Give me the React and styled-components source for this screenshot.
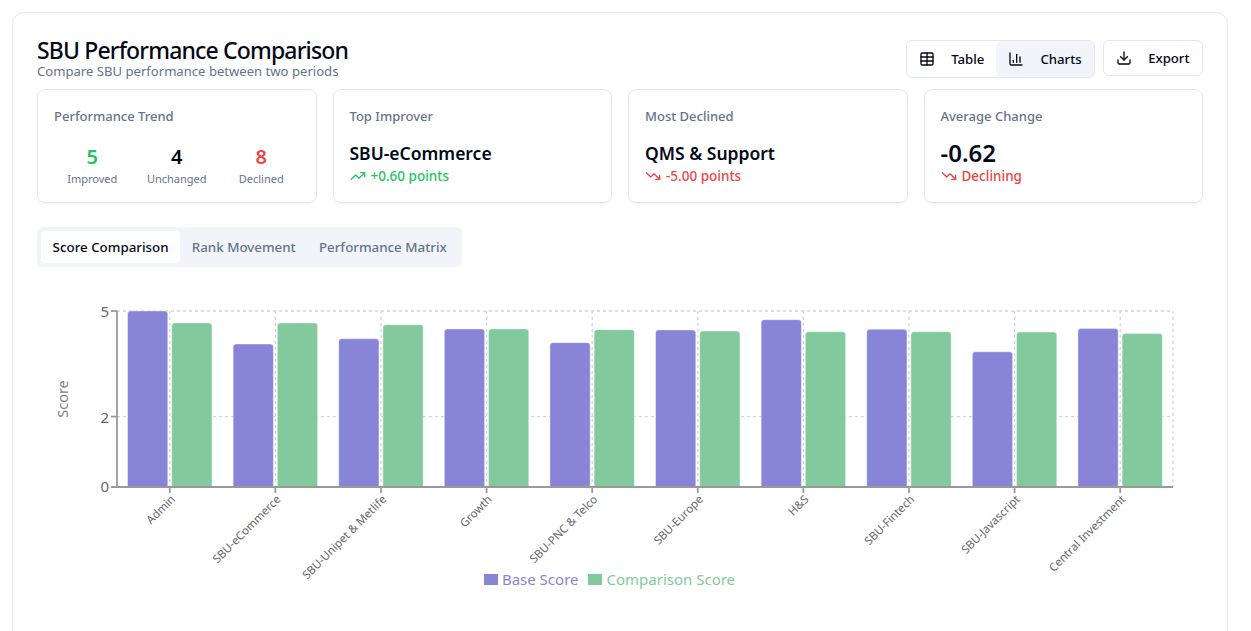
import React from 'react';
import styled, { createGlobalStyle } from 'styled-components';
import { Table, ChartColumn, Download, TrendingUp, TrendingDown } from 'lucide-react';

const GlobalStyle = createGlobalStyle`
  html, body {
    margin: 0;
    height: 631px;
    overflow: hidden;
    background: #ffffff;
  }
  body {
    font-family: 'Noto Sans', 'Open Sans', sans-serif;
    color: #020817;
  }
`;

const Page = styled.div`
  padding: 12px 23px 0 12px;
`;
const Panel = styled.section`
  box-sizing: border-box;
  height: 700px;
  padding: 24px;
  background: #fff;
  border: 1px solid #e2e8f0;
  border-radius: 12px;
`;
const Header = styled.header`
  display: flex;
  justify-content: space-between;
  align-items: flex-start;
`;
const Title = styled.h1`
  margin: 0;
  font-size: 23px;
  line-height: 27px;
  font-weight: 500;
  letter-spacing: -0.84px;
`;
const Subtitle = styled.p`
  margin: 0;
  font-size: 13.1px;
  line-height: 14px;
  color: #64748b;
`;
const Actions = styled.div`
  display: flex;
  gap: 8px;
  padding-top: 3px;
`;
const ViewSwitch = styled.div`
  display: flex;
  height: 38px;
  box-sizing: border-box;
  border: 1px solid #e2e8f0;
  border-radius: 6px;
`;
const ViewButton = styled.button`
  display: flex;
  align-items: center;
  gap: 16px;
  padding: 0 12px;
  font: 500 13.2px 'Noto Sans', sans-serif;
  color: #020817;
  border: 0;
  border-radius: 6px;
  background: ${p => (p.$active ? '#f1f5f9' : 'transparent')};
`;
const ExportButton = styled(ViewButton)`
  height: 36px;
  border: 1px solid #e2e8f0;
  background: #fff;
  padding: 0 12.5px;
`;
const Cards = styled.div`
  display: grid;
  grid-template-columns: repeat(4, minmax(0, 1fr));
  gap: 16px;
  margin-top: 11px;
`;
const Card = styled.div`
  box-sizing: border-box;
  height: 114px;
  padding: 16px;
  border: 1px solid #e2e8f0;
  border-radius: 8px;
  box-shadow: 0 1px 2px rgba(0, 0, 0, 0.05);
`;
const CardLabel = styled.div`
  font-size: 13px;
  line-height: 20px;
  font-weight: 500;
  color: #64748b;
`;
const TrendRow = styled.div`
  display: grid;
  grid-template-columns: repeat(3, 84.5px);
  justify-content: center;
  margin-top: 17px;
  text-align: center;
`;
const TrendCount = styled.div`
  font-size: 20px;
  line-height: 28px;
  font-weight: 600;
  color: ${p => p.$color};
`;
const TrendName = styled.div`
  font-size: 11px;
  line-height: 16px;
  color: #64748b;
`;
const CardValue = styled.div`
  margin-top: 13px;
  font-size: ${p => (p.$large ? '24px' : '17.5px')};
  line-height: 28px;
  font-weight: 600;
  color: #020817;
`;
const Delta = styled.div`
  display: flex;
  align-items: center;
  gap: 5px;
  font-size: 13.5px;
  line-height: 18px;
  font-weight: 500;
  color: ${p => p.$color};
`;
const TabList = styled.div`
  display: inline-flex;
  margin-top: 24px;
  padding: 4px;
  height: 40px;
  box-sizing: border-box;
  background: #f1f5f9;
  border-radius: 6px;
`;
const Tab = styled.div`
  display: flex;
  align-items: center;
  padding: 0 11.6px;
  font-size: 13.35px;
  font-weight: 500;
  border-radius: 4px;
  color: ${p => (p.$active ? '#020817' : '#64748b')};
  background: ${p => (p.$active ? '#fff' : 'transparent')};
`;
const ChartWrap = styled.div`
  margin-top: 28px;
`;
const ChartSvg = styled.svg`
  display: block;
  width: 1166px;
  height: 277px;
  overflow: visible;
`;
const Legend = styled.div`
  display: flex;
  justify-content: center;
  gap: 10px;
  margin-top: -2px;
  padding-right: 21px;
`;
const LegendItem = styled.div`
  display: flex;
  align-items: center;
  gap: 4px;
  font-size: 15px;
  line-height: 18px;
  color: ${p => p.$color};
`;
const LegendSwatch = styled.span`
  width: 14px;
  height: 11px;
  background: ${p => p.$color};
`;

const BASE = '#8884d8';
const COMPARE = '#82ca9d';
const GREEN = '#22c55e';
const RED = '#ef4444';

const data = [
  ['Admin', 5.0, 4.66],
  ['SBU-eCommerce', 4.06, 4.66],
  ['SBU-Unipet & Metlife', 4.21, 4.61],
  ['Growth', 4.49, 4.49],
  ['SBU-PNC & Telco', 4.1, 4.47],
  ['SBU-Europe', 4.46, 4.43],
  ['H&S', 4.75, 4.41],
  ['SBU-Fintech', 4.48, 4.41],
  ['SBU-Javascript', 3.84, 4.4],
  ['Central Investment', 4.5, 4.36],
];

// plot area in svg coordinates (svg sits at x=37, y=295 on the page)
const LEFT = 80;
const RIGHT = 1136;
const TOP = 16;
const BOTTOM = 192;
const BAND = (RIGHT - LEFT) / data.length;
const BAR_W = 40.2;
const yOf = v => BOTTOM - (v / 5) * (BOTTOM - TOP);

const barPath = (x, y, w, r = 3) =>
  `M${x},${BOTTOM}V${y + r}Q${x},${y} ${x + r},${y}H${x + w - r}Q${x + w},${y} ${x + w},${y + r}V${BOTTOM}Z`;

const Chart = () => (
  <ChartSvg viewBox="0 0 1166 277">
    <g stroke="#d4d4d4" strokeWidth="1.3" strokeDasharray="3 3" fill="none">
      {[5, 2].map(v => (
        <line key={v} x1={LEFT} x2={RIGHT} y1={yOf(v)} y2={yOf(v)} />
      ))}
      {data.map((d, i) => (
        <line key={d[0]} x1={LEFT + BAND * (i + 0.5)} x2={LEFT + BAND * (i + 0.5)} y1={TOP} y2={BOTTOM} />
      ))}
      <line x1={RIGHT} x2={RIGHT} y1={TOP} y2={BOTTOM} />
    </g>
    {data.map((d, i) => {
      const x0 = LEFT + BAND * i + BAND * 0.1;
      return (
        <g key={d[0]} stroke="#fff" strokeOpacity="0.6" strokeWidth="0.6">
          <path d={barPath(x0, yOf(d[1]), BAR_W)} fill={BASE} />
          <path d={barPath(x0 + BAR_W + 4, yOf(d[2]), BAR_W)} fill={COMPARE} />
        </g>
      );
    })}
    <g stroke="#999" strokeWidth="1.8">
      <line x1={LEFT} x2={LEFT} y1={TOP} y2={BOTTOM} />
      <line x1={LEFT - 6} x2={RIGHT} y1={BOTTOM} y2={BOTTOM} />
      {[5, 2].map(v => (
        <line key={v} x1={LEFT - 6} x2={LEFT} y1={yOf(v)} y2={yOf(v)} />
      ))}
      {data.map((d, i) => (
        <line key={d[0]} x1={LEFT + BAND * (i + 0.5)} x2={LEFT + BAND * (i + 0.5)} y1={BOTTOM} y2={BOTTOM + 6} />
      ))}
    </g>
    <g fill="#666" fontSize="15" textAnchor="end" fontFamily="Noto Sans, sans-serif">
      <text x={LEFT - 8} y={yOf(5) + 6}>5</text>
      <text x={LEFT - 8} y={yOf(2) + 6}>2</text>
      <text x={LEFT - 8} y={yOf(0) + 5}>0</text>
    </g>
    <text
      transform="translate(31 104) rotate(-90)"
      textAnchor="middle"
      fill="#808080"
      fontSize="14.5"
      fontFamily="Noto Sans, sans-serif"
    >
      Score
    </text>
    <g fill="#666" fontSize="11.4" textAnchor="end" fontFamily="Noto Sans, sans-serif">
      {data.map((d, i) => {
        const x = LEFT + BAND * (i + 0.5) + 6;
        return (
          <text key={d[0]} transform={`translate(${x} ${BOTTOM + 13}) rotate(-45)`}>
            {d[0]}
          </text>
        );
      })}
    </g>
  </ChartSvg>
);

export default function App() {
  return (
    <Page>
      <GlobalStyle />
      <Panel>
        <Header>
          <div>
            <Title>SBU Performance Comparison</Title>
            <Subtitle>Compare SBU performance between two periods</Subtitle>
          </div>
          <Actions>
            <ViewSwitch>
              <ViewButton>
                <Table size={16} />
                Table
              </ViewButton>
              <ViewButton $active>
                <ChartColumn size={16} />
                Charts
              </ViewButton>
            </ViewSwitch>
            <ExportButton>
              <Download size={16} />
              Export
            </ExportButton>
          </Actions>
        </Header>
        <Cards>
          <Card>
            <CardLabel>Performance Trend</CardLabel>
            <TrendRow>
              <div>
                <TrendCount $color={GREEN}>5</TrendCount>
                <TrendName>Improved</TrendName>
              </div>
              <div>
                <TrendCount $color="#020817">4</TrendCount>
                <TrendName>Unchanged</TrendName>
              </div>
              <div>
                <TrendCount $color={RED}>8</TrendCount>
                <TrendName>Declined</TrendName>
              </div>
            </TrendRow>
          </Card>
          <Card>
            <CardLabel>Top Improver</CardLabel>
            <CardValue>SBU-eCommerce</CardValue>
            <Delta $color={GREEN}>
              <TrendingUp size={16} />
              +0.60 points
            </Delta>
          </Card>
          <Card>
            <CardLabel>Most Declined</CardLabel>
            <CardValue>QMS &amp; Support</CardValue>
            <Delta $color={RED}>
              <TrendingDown size={16} />
              -5.00 points
            </Delta>
          </Card>
          <Card>
            <CardLabel>Average Change</CardLabel>
            <CardValue $large>-0.62</CardValue>
            <Delta $color={RED}>
              <TrendingDown size={16} />
              Declining
            </Delta>
          </Card>
        </Cards>
        <TabList>
          <Tab $active>Score Comparison</Tab>
          <Tab>Rank Movement</Tab>
          <Tab>Performance Matrix</Tab>
        </TabList>
        <ChartWrap>
          <Chart />
          <Legend>
            <LegendItem $color={BASE}>
              <LegendSwatch $color={BASE} />
              Base Score
            </LegendItem>
            <LegendItem $color={COMPARE}>
              <LegendSwatch $color={COMPARE} />
              Comparison Score
            </LegendItem>
          </Legend>
        </ChartWrap>
      </Panel>
    </Page>
  );
}
